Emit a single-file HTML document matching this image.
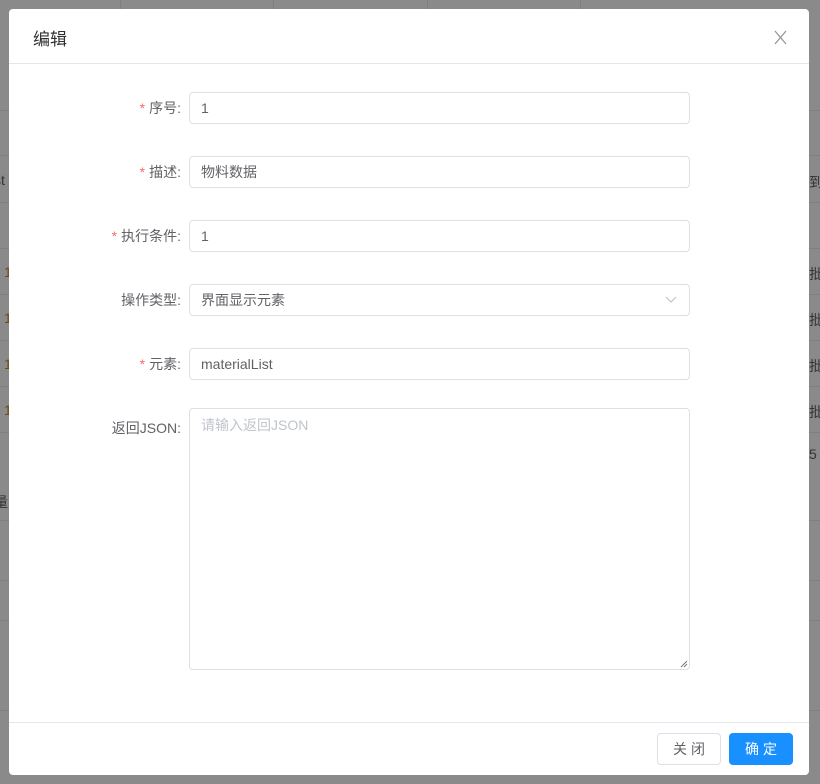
<!DOCTYPE html>
<html><head><meta charset="utf-8"><style>
*{margin:0;padding:0;box-sizing:border-box}
body{width:820px;height:784px;background:#8a8a8a;position:relative;overflow:hidden;font-family:"Liberation Sans","Noto Sans CJK SC",sans-serif;font-size:14px;color:#606266}
.hl{position:absolute;left:0;width:820px;height:1px;background:#7f7f7f}
.vl{position:absolute;top:0;height:18px;width:1px;background:#7f7f7f}
.bg{position:absolute;color:#333;font-size:14px}
.modal{position:absolute;left:9px;top:9px;width:800px;height:766px;background:#fff;border-radius:4px}
.title{position:absolute;left:24px;top:16px;font-size:17px;color:#303133}
.close{position:absolute;left:765px;top:21px}
.hline{position:absolute;left:0;top:54px;width:800px;height:1px;background:#e4e7ed}
.fline{position:absolute;left:0;top:713px;width:800px;height:1px;background:#e4e7ed}
.lbl{position:absolute;right:628px;width:160px;text-align:right;color:#606266;font-size:14px;line-height:32px}
.lbl i{color:#f56c6c;font-style:normal;margin-right:4px}
.in{position:absolute;left:180px;width:501px;height:32px;border:1px solid #dcdfe6;border-radius:4px;padding-left:11px;line-height:30px;color:#606266;font-size:14px}
.ta{height:262px;color:#c0c4cc;line-height:20px;padding-top:6px}
.btn{position:absolute;top:724px;height:32px;width:64px;border-radius:4px;text-align:center;line-height:30px;font-size:14px;letter-spacing:4px;text-indent:4px}
</style></head><body>
<div class="hl" style="top:110px"></div><div class="hl" style="top:155px"></div><div class="hl" style="top:202px"></div><div class="hl" style="top:248px"></div><div class="hl" style="top:294px"></div><div class="hl" style="top:340px"></div><div class="hl" style="top:386px"></div><div class="hl" style="top:432px"></div><div class="hl" style="top:520px"></div><div class="hl" style="top:580px"></div><div class="hl" style="top:620px"></div><div class="hl" style="top:710px"></div>
<div class="vl" style="left:120px"></div><div class="vl" style="left:273px"></div><div class="vl" style="left:427px"></div><div class="vl" style="left:580px"></div>
<div class="bg" style="left:-6px;top:172px">st</div>
<div class="bg" style="left:4px;top:264px;color:#6b4a10">1</div><div class="bg" style="left:4px;top:310px;color:#6b4a10">1</div><div class="bg" style="left:4px;top:356px;color:#6b4a10">1</div><div class="bg" style="left:4px;top:402px;color:#6b4a10">1</div>
<div class="bg" style="left:-6px;top:492px">量</div>
<div class="bg" style="left:809px;top:264px">批</div><div class="bg" style="left:809px;top:310px">批</div><div class="bg" style="left:809px;top:356px">批</div><div class="bg" style="left:809px;top:402px">批</div><div class="bg" style="left:809px;top:446px">5</div><div class="bg" style="left:809px;top:172px">到</div>
<div class="modal">
<div class="title">编辑</div>
<svg class="close" width="13" height="15" viewBox="0 0 13 15"><path d="M1 1L12 14M12 1L1 14" stroke="#909399" stroke-width="1.2"/></svg>
<div class="hline"></div>
<div class="lbl" style="top:83px"><i>*</i>序号:</div><div class="in" style="top:83px">1</div>
<div class="lbl" style="top:147px"><i>*</i>描述:</div><div class="in" style="top:147px">物料数据</div>
<div class="lbl" style="top:211px"><i>*</i>执行条件:</div><div class="in" style="top:211px">1</div>
<div class="lbl" style="top:275px">操作类型:</div><div class="in" style="top:275px">界面显示元素<svg style="position:absolute;right:12px;top:11px" width="12" height="8" viewBox="0 0 12 8"><path d="M1 1L6 6L11 1" fill="none" stroke="#c0c4cc" stroke-width="1.2"/></svg></div>
<div class="lbl" style="top:339px"><i>*</i>元素:</div><div class="in" style="top:339px">materialList</div>
<div class="lbl" style="top:403px">返回JSON:</div><div class="in ta" style="top:399px">请输入返回JSON<svg style="position:absolute;right:1px;bottom:1px" width="8" height="8" viewBox="0 0 8 8"><path d="M1 7L7 1M4 7L7 4" stroke="#777" stroke-width="1"/></svg></div>
<div class="fline"></div>
<div class="btn" style="left:648px;border:1px solid #dcdfe6;color:#606266">关闭</div>
<div class="btn" style="left:720px;background:#1890ff;border:1px solid #1890ff;color:#fff">确定</div>
</div>
</body></html>
